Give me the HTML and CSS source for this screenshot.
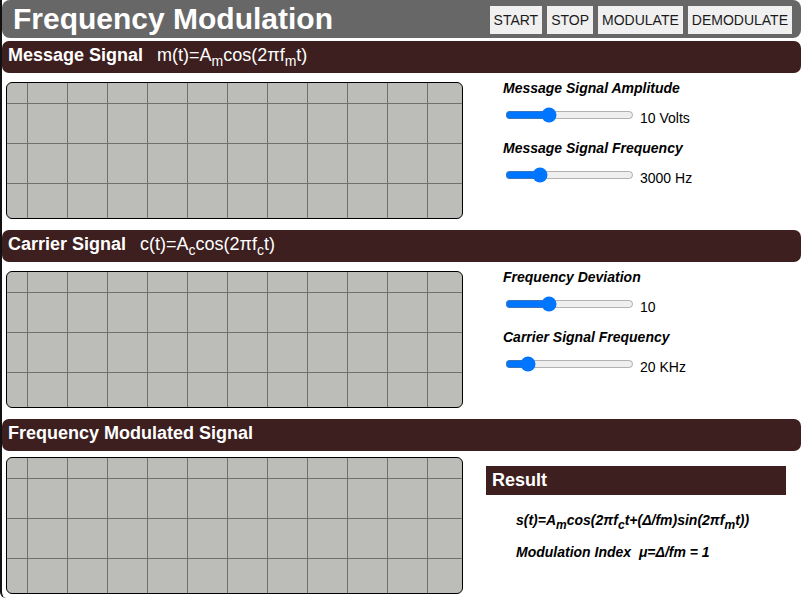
FILE: index.html
```html
<!DOCTYPE html>
<html>
<head>
<meta charset="utf-8">
<link rel="stylesheet" href="styles.css">
</head>
<body>
<div class="app">
  <header class="topbar">
    <h1 class="title">Frequency Modulation</h1>
    <div class="buttons">
      <button class="btn">START</button>
      <button class="btn">STOP</button>
      <button class="btn">MODULATE</button>
      <button class="btn">DEMODULATE</button>
    </div>
  </header>

  <section class="section">
    <div class="bar"><b>Message Signal</b><span class="formula">m(t)=A<sub>m</sub>cos(2πf<sub>m</sub>t)</span></div>
    <div class="row">
      <div class="graph"></div>
      <div class="controls">
        <div class="ctrl-label">Message Signal Amplitude</div>
        <div class="slider-row"><input type="range" min="0" max="100" value="32"><span class="val">10 Volts</span></div>
        <div class="ctrl-label">Message Signal Frequency</div>
        <div class="slider-row"><input type="range" min="0" max="100" value="24"><span class="val">3000 Hz</span></div>
      </div>
    </div>
  </section>

  <section class="section">
    <div class="bar"><b>Carrier Signal</b><span class="formula">c(t)=A<sub>c</sub>cos(2πf<sub>c</sub>t)</span></div>
    <div class="row">
      <div class="graph"></div>
      <div class="controls">
        <div class="ctrl-label">Frequency Deviation</div>
        <div class="slider-row"><input type="range" min="0" max="100" value="32"><span class="val">10</span></div>
        <div class="ctrl-label">Carrier Signal Frequency</div>
        <div class="slider-row"><input type="range" min="0" max="100" value="13"><span class="val">20 KHz</span></div>
      </div>
    </div>
  </section>

  <section class="section last">
    <div class="bar"><b>Frequency Modulated Signal</b></div>
    <div class="row">
      <div class="graph"></div>
      <div class="result">
        <div class="result-head">Result</div>
        <p class="res-line">s(t)=A<sub>m</sub>cos(2πf<sub>c</sub>t+(Δ/fm)sin(2πf<sub>m</sub>t))</p>
        <p class="res-line">Modulation Index&nbsp; μ=Δ/fm = 1</p>
      </div>
    </div>
  </section>
</div>
</body>
</html>
```

FILE: styles.css
```css
html, body {
  margin: 0;
  padding: 0;
  background: #ffffff;
}
body {
  font-family: "Liberation Sans", Arial, sans-serif;
  color: #000;
}
.app {
  border-left: 2px solid #111;
  border-bottom-left-radius: 6px;
  height: 598px;
  overflow: hidden;
}
.topbar {
  height: 38px;
  background: #676767;
  border-radius: 8px;
  display: flex;
  align-items: center;
  justify-content: space-between;
  padding: 0 9px 0 11px;
  margin-bottom: 3px;
}
.title {
  margin: 0;
  font-size: 30px;
  font-weight: bold;
  color: #ffffff;
  line-height: 38px;
}
.buttons {
  display: flex;
  gap: 5px;
  margin-top: 2px;
}
.btn {
  font-family: "Liberation Sans", Arial, sans-serif;
  font-size: 14px;
  color: #1a1a1a;
  background: #f0f0f0;
  border: none;
  height: 28px;
  padding: 0 4px;
}
.section {
  margin-bottom: 11px;
}
.bar {
  height: 29px;
  padding-bottom: 3px;
  background: #3d1f1f;
  border-radius: 7px;
  color: #ffffff;
  font-size: 18px;
  display: flex;
  align-items: center;
  padding-left: 6px;
  margin-bottom: 9px;
}
.bar b {
  font-weight: bold;
}
.formula {
  margin-left: 14px;
}
.bar sub {
  font-size: 14px;
  vertical-align: -5px;
  line-height: 0;
}
.last .bar {
  margin-bottom: 6px;
}
.row {
  display: flex;
  align-items: flex-start;
}
.graph {
  width: 455px;
  height: 135px;
  margin-left: 4px;
  border: 1px solid #000;
  border-radius: 6px;
  background-color: #bcbdb9;
  background-image:
    linear-gradient(to right, #707070 1.5px, transparent 1.5px),
    linear-gradient(to bottom, #707070 1.5px, transparent 1.5px);
  background-size: 40px 40px;
  background-position: 20px 20px;
}
.controls {
  margin-left: 40px;
  margin-top: -2px;
}
.ctrl-label {
  font-size: 14px;
  font-weight: bold;
  font-style: italic;
  line-height: 16px;
  margin-bottom: 9px;
}
.slider-row {
  display: flex;
  align-items: center;
  height: 20px;
  margin-bottom: 15px;
}
.slider-row input {
  width: 129px;
  margin: 2px;
}
.val {
  font-size: 14px;
  margin-left: 4px;
  padding-top: 6px;
}
.result {
  margin-left: 23px;
  margin-top: 9px;
}
.result-head {
  width: 294px;
  height: 29px;
  background: #3d1f1f;
  color: #ffffff;
  font-size: 18px;
  font-weight: bold;
  line-height: 28px;
  padding-left: 6px;
}
.res-line {
  margin: 0 0 16px 30px;
  font-size: 14px;
  font-weight: bold;
  font-style: italic;
  line-height: 16px;
}
.res-line:first-of-type {
  margin-top: 17px;
}
.res-line sub {
  font-size: 12px;
  vertical-align: -4px;
  line-height: 0;
}
```
